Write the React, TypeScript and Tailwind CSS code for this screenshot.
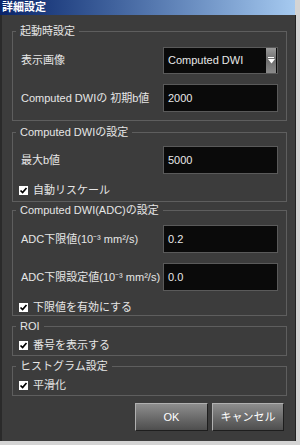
import React from "react";

const font = { fontFamily: '"Liberation Sans", "Noto Sans CJK JP", sans-serif' };

function Group({ title, className, children }: { title: string; className?: string; children: React.ReactNode }) {
  return (
    <div className={"relative ml-[10px] mr-[8px] border border-[#5e5e5e] " + (className ?? "")}>
      <span className="absolute left-[3px] top-[-8px] bg-[#3c3c3c] px-[4px] text-[11px] leading-[14px] text-[#e6e6e6]">
        {title}
      </span>
      {children}
    </div>
  );
}

function Input({ value }: { value: string }) {
  return (
    <div className="flex h-[28px] w-[115px] items-center border border-[#5a5a5a] bg-[#0a0a0a] pl-[4px] text-[11px] text-[#e8e8e8]">
      {value}
    </div>
  );
}

function Row({ label, children, className }: { label: React.ReactNode; children: React.ReactNode; className?: string }) {
  return (
    <div className={"flex items-center justify-between pl-[8px] pr-[8px] " + (className ?? "")}>
      <span className="text-[11px] text-[#e6e6e6] whitespace-nowrap">{label}</span>
      {children}
    </div>
  );
}

function Check({ label, className }: { label: string; className?: string }) {
  return (
    <div className={"flex items-center gap-[5px] pl-[6px] " + (className ?? "")}>
      <span className="flex h-[9px] w-[9px] items-center justify-center bg-white">
        <svg width="9" height="9" viewBox="0 0 9 9">
          <path d="M1.5 4.5 L3.6 6.6 L7.5 2" stroke="#000" strokeWidth="1.7" fill="none" />
        </svg>
      </span>
      <span className="text-[11px] text-[#e6e6e6]">{label}</span>
    </div>
  );
}

export default function App() {
  return (
    <div className="flex h-[445px] w-[300px] flex-col bg-[#d4d4d4]" style={font}>
      <div className="flex h-[15px] w-[295px] items-center bg-gradient-to-r from-[#0a246a] to-[#a6caf0] pl-[2px] text-[11px] font-bold text-white">
        詳細設定
      </div>
      <div className="flex h-[426px] w-[296px] flex-col border-l-2 border-r border-l-[#2a2a2a] border-r-[#222] bg-[#3c3c3c] pt-[16px]">
        <Group title="起動時設定" className="h-[90px] pt-[15px]">
          <Row label="表示画像">
            <div className="flex h-[27px] w-[115px] items-center justify-between border border-[#5a5a5a] bg-[#0a0a0a] pl-[4px] text-[11px] text-[#e8e8e8]">
              <span>Computed DWI</span>
              <div className="mr-[1px] flex h-[25px] w-[10px] flex-col items-center justify-center bg-gradient-to-b from-[#9a9a9a] via-[#6e6e6e] to-[#8a8a8a]">
                <div className="mb-[1px] h-[1px] w-[6px] bg-white" />
                <svg width="7" height="5" viewBox="0 0 7 5">
                  <path d="M0 0 L7 0 L3.5 4.5 Z" fill="#fff" />
                </svg>
              </div>
            </div>
          </Row>
          <Row label="Computed DWIの 初期b値" className="mt-[10px]">
            <Input value="2000" />
          </Row>
        </Group>
        <Group title="Computed DWIの設定" className="mt-[11px] h-[70px] pt-[13px]">
          <Row label="最大b値">
            <Input value="5000" />
          </Row>
          <Check label="自動リスケール" className="mt-[8px]" />
        </Group>
        <Group title="Computed DWI(ADC)の設定" className="mt-[8px] h-[106px] pt-[14px]">
          <Row label="ADC下限値(10⁻³ mm²/s)">
            <Input value="0.2" />
          </Row>
          <Row label="ADC下限設定値(10⁻³ mm²/s)" className="mt-[10px]">
            <Input value="0.0" />
          </Row>
          <Check label="下限値を有効にする" className="mt-[8px]" />
        </Group>
        <Group title="ROI" className="mt-[10px] h-[30px] pt-[10px]">
          <Check label="番号を表示する" />
        </Group>
        <Group title="ヒストグラム設定" className="mt-[10px] h-[30px] pt-[10px]">
          <Check label="平滑化" />
        </Group>
        <div className="mr-[8px] mt-[7px] flex justify-end gap-[4px] pr-[3px]">
          <button className="h-[28px] w-[73px] border border-t-[#b0b0b0] border-l-[#b0b0b0] border-b-[#1e1e1e] border-r-[#1e1e1e] bg-gradient-to-b from-[#8e8e8e] to-[#4e4e4e] text-[11px] text-white">
            OK
          </button>
          <button className="h-[28px] w-[72px] border border-t-[#b0b0b0] border-l-[#b0b0b0] border-b-[#1e1e1e] border-r-[#1e1e1e] bg-gradient-to-b from-[#8e8e8e] to-[#4e4e4e] text-[11px] text-white">
            キャンセル
          </button>
        </div>
      </div>
    </div>
  );
}
